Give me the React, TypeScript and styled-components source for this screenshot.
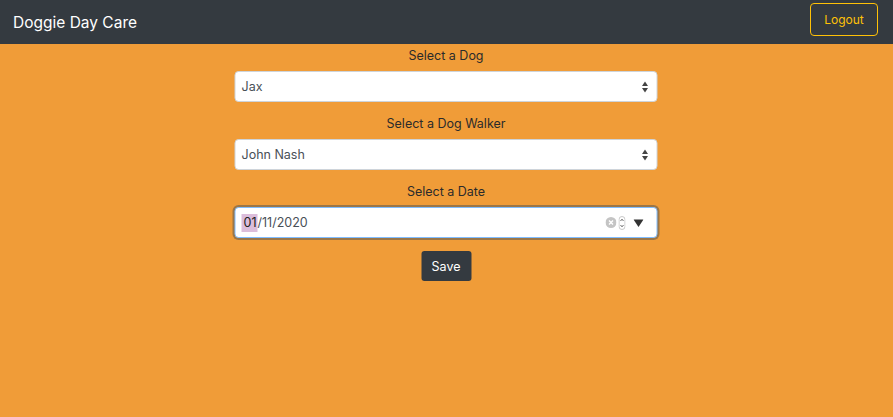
import React from "react";
import styled, { createGlobalStyle } from "styled-components";

const Global = createGlobalStyle`
  html, body { margin: 0; padding: 0; height: 100%; }
  body { font-family: Inter, "Noto Sans", Roboto, sans-serif; background: #f09c38; }
  #root { min-height: 100%; }
`;

const Page = styled.div`
  min-height: 417px;
  background: #f09c38;
`;

const Nav = styled.nav`
  height: 44px;
  background: #343a40;
  display: flex;
  align-items: center;
  justify-content: space-between;
  padding: 0 15px 0 13px;
  box-sizing: border-box;
`;

const Brand = styled.span`
  color: #fff;
  font-size: 15.5px;
`;

const OutlineButton = styled.button`
  font-family: inherit;
  background: transparent;
  border: 1px solid #ffc107;
  color: #ffc107;
  border-radius: 4px;
  font-size: 12px;
  height: 33px;
  width: 68px;
  padding: 0;
  margin-top: -5px;
`;

const Form = styled.form`
  width: 423px;
  margin: 0 auto;
  padding-top: 1px;
  display: flex;
  flex-direction: column;
  align-items: stretch;
  text-align: center;
  transform: translateX(-0.5px);
`;

const Group = styled.div`
  display: flex;
  flex-direction: column;
  margin-bottom: 11px;
`;

const Label = styled.label`
  font-size: 12.5px;
  line-height: 20px;
  color: #2b2b2b;
  margin-bottom: 6px;
  transform: translateY(1px);
`;

const Field = styled.div<{ $focus?: boolean }>`
  height: 31px;
  box-sizing: border-box;
  background: #fff;
  border: 1px solid ${(p) => (p.$focus ? "#80bdff" : "#ced4da")};
  border-radius: 4px;
  box-shadow: ${(p) => (p.$focus ? "0 0 0 2px rgba(0,50,100,0.35)" : "none")};
  display: flex;
  align-items: center;
  padding: 0 ${(p) => (p.$focus ? "13px" : "8px")} 0 6px;
  font-size: 12.5px;
  color: #495057;
  text-align: left;
`;

const Value = styled.span`
  flex: 1;
  display: flex;
  align-items: center;
`;

const Highlight = styled.span`
  display: inline-block;
  background: #dcbddb;
  color: #222;
  line-height: 18px;
  padding: 0 1px 0 2px;
`;

const IconRow = styled.span`
  display: flex;
  align-items: center;
  gap: 2px;
`;

const SaveRow = styled.div`
  display: flex;
  justify-content: center;
  margin-top: 2px;
`;

const SaveButton = styled.button`
  font-family: inherit;
  background: #343a40;
  color: #fff;
  border: none;
  border-radius: 3px;
  font-size: 12.5px;
  height: 30px;
  width: 50px;
  padding: 0;
`;

const UpDown = () => (
  <svg width="7" height="12" viewBox="0 0 7 12">
    <path d="M3.5 0.5 L6.5 5 H0.5 Z" fill="#444" />
    <path d="M3.5 11.5 L6.5 7 H0.5 Z" fill="#444" />
  </svg>
);

const Clear = () => (
  <svg width="11" height="11" viewBox="0 0 11 11">
    <circle cx="5.5" cy="5.5" r="5.5" fill="#c4c4c4" />
    <path d="M3.5 3.5 L7.5 7.5 M7.5 3.5 L3.5 7.5" stroke="#fff" strokeWidth="1.4" />
  </svg>
);

const Spin = () => (
  <svg width="7" height="14" viewBox="0 0 7 14">
    <rect x="0.5" y="0.5" width="6" height="13" rx="3" fill="#fff" stroke="#bbb" strokeWidth="0.8" />
    <path d="M2 5 L3.5 3.2 L5 5" stroke="#444" strokeWidth="0.8" fill="none" />
    <path d="M2 9 L3.5 10.8 L5 9" stroke="#444" strokeWidth="0.8" fill="none" />
  </svg>
);

const Triangle = () => (
  <svg width="10" height="8" viewBox="0 0 10 8" style={{ marginLeft: 6 }}>
    <path d="M0 0.5 H10 L5 8 Z" fill="#333" />
  </svg>
);

export default function App() {
  return (
    <Page>
      <Global />
      <Nav>
        <Brand>Doggie Day Care</Brand>
        <OutlineButton type="button">Logout</OutlineButton>
      </Nav>
      <Form onSubmit={(e) => e.preventDefault()}>
        <Group>
          <Label>Select a Dog</Label>
          <Field>
            <Value>Jax</Value>
            <UpDown />
          </Field>
        </Group>
        <Group>
          <Label>Select a Dog Walker</Label>
          <Field>
            <Value>John Nash</Value>
            <UpDown />
          </Field>
        </Group>
        <Group>
          <Label>Select a Date</Label>
          <Field $focus>
            <Value>
              <Highlight>01</Highlight>/11/2020
            </Value>
            <IconRow>
              <Clear />
              <Spin />
              <Triangle />
            </IconRow>
          </Field>
        </Group>
        <SaveRow>
          <SaveButton type="submit">Save</SaveButton>
        </SaveRow>
      </Form>
    </Page>
  );
}
